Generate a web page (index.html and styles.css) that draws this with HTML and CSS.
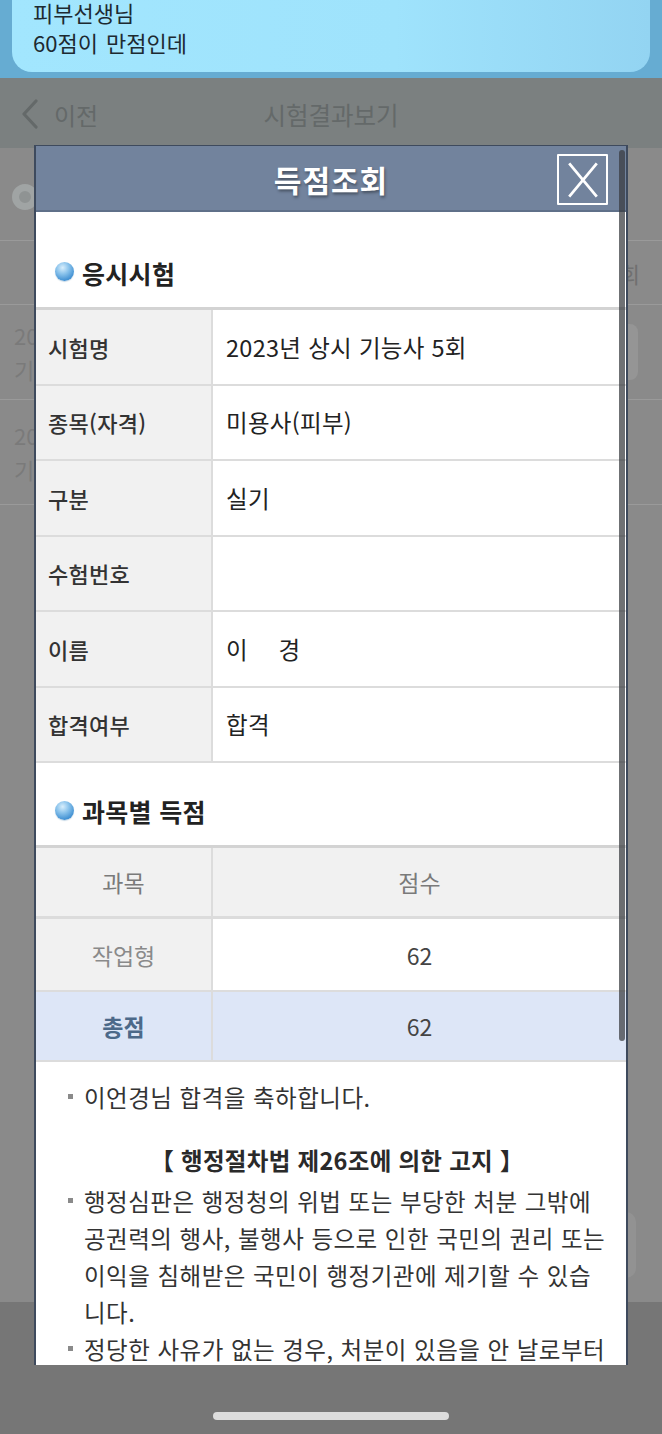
FILE: index.html
```html
<!DOCTYPE html>
<html lang="ko">
<head>
<meta charset="utf-8">
<title>득점조회</title>
<link rel="stylesheet" href="styles.css">
</head>
<body>
<div class="screen">
  <div class="statusbar">
    <div class="banner">
      <div class="banner-text">피부선생님<br>60점이 만점인데</div>
    </div>
  </div>

  <div class="appbar">
    <div class="back">
      <svg class="chev" viewBox="0 0 20 30" width="20" height="30"><path d="M16 2 L4 15 L16 28" fill="none" stroke="#646969" stroke-width="3.2" stroke-linecap="round" stroke-linejoin="round"/></svg>
      <span>이전</span>
    </div>
    <div class="apptitle">시험결과보기</div>
    <div></div>
  </div>

  <div class="page">
    <div class="filter"><span class="ring"></span></div>
    <div class="list-head"><span>조회</span></div>
    <div class="list-row">
      <div class="lr-text">2023<br>기능</div>
      <div class="lr-btn"></div>
    </div>
    <div class="list-row tall">
      <div class="lr-text">2023<br>기능</div>
    </div>
    <div class="page-fill"></div>
    <div class="float-box"></div>
  </div>

  <div class="tabbar">
    <div class="home-ind"></div>
  </div>

  <div class="modal">
    <div class="modal-head">
      <h1>득점조회</h1>
      <button class="close" type="button" aria-label="닫기">
        <svg viewBox="0 0 50 50" width="46" height="46"><path d="M10 7 L40 43 M40 7 L10 43" stroke="#fff" stroke-width="3" fill="none"/></svg>
      </button>
    </div>
    <div class="modal-body">
      <h2 class="sec sec1"><span class="dot"></span>응시시험</h2>
      <div class="info">
        <div class="row"><div class="lab">시험명</div><div class="val">2023년 상시 기능사 5회</div></div>
        <div class="row"><div class="lab">종목(자격)</div><div class="val">미용사(피부)</div></div>
        <div class="row"><div class="lab">구분</div><div class="val">실기</div></div>
        <div class="row"><div class="lab">수험번호</div><div class="val"></div></div>
        <div class="row"><div class="lab">이름</div><div class="val">이&nbsp;&emsp;경</div></div>
        <div class="row"><div class="lab">합격여부</div><div class="val">합격</div></div>
      </div>

      <h2 class="sec sec2"><span class="dot"></span>과목별 득점</h2>
      <div class="score">
        <div class="srow shead"><div class="sl">과목</div><div class="sv">점수</div></div>
        <div class="srow sitem"><div class="sl">작업형</div><div class="sv">62</div></div>
        <div class="srow stotal"><div class="sl">총점</div><div class="sv">62</div></div>
      </div>

      <div class="notes">
        <p class="bul">이언경님 합격을 축하합니다.</p>
        <p class="notice-title">【 행정절차법 제26조에 의한 고지 】</p>
        <p class="bul">행정심판은 행정청의 위법 또는 부당한 처분 그밖에 공권력의 행사, 불행사 등으로 인한 국민의 권리 또는 이익을 침해받은 국민이 행정기관에 제기할 수 있습니다.</p>
        <p class="bul">정당한 사유가 없는 경우, 처분이 있음을 안 날로부터 90일 이내에 행정심판을 청구할 수 있습니다.</p>
      </div>
    </div>
    <div class="scrollbar"></div>
  </div>
</div>
</body>
</html>
```

FILE: styles.css
```css
* { box-sizing: border-box; }

html, body {
  margin: 0;
  padding: 0;
}

body {
  width: 662px;
  height: 1434px;
  overflow: hidden;
  font-family: "Noto Sans CJK KR", "Noto Sans", sans-serif;
  background: #8a8a8a;
}

.screen {
  position: relative;
  width: 662px;
  height: 1434px;
  overflow: hidden;
  display: flex;
  flex-direction: column;
}

/* ---------- notification banner ---------- */
.statusbar {
  height: 78px;
  background: #66acd2;
  padding: 0 12px;
}

.banner {
  height: 75px;
  border-radius: 0 0 20px 20px;
  background: linear-gradient(90deg, #a2e6fe 0%, #9fe3fc 60%, #93d4f2 100%);
  padding-left: 21px;
}

.banner-text {
  margin-top: -3px;
  font-size: 22px;
  line-height: 30px;
  color: #1d2a31;
  word-spacing: 2px;
}

/* ---------- dimmed app bar ---------- */
.appbar {
  height: 70px;
  background: #7b8080;
  display: grid;
  grid-template-columns: 1fr auto 1fr;
  align-items: center;
}

.back {
  display: flex;
  align-items: center;
  gap: 14px;
  padding-left: 20px;
  color: #646969;
  font-size: 24px;
  padding-top: 2px;
}

.chev { display: block; }

.apptitle {
  font-size: 24.5px;
  color: #646969;
  padding-top: 2px;
}

/* ---------- dimmed page behind ---------- */
.page {
  flex: 1;
  background: #8a8a8a;
  display: flex;
  flex-direction: column;
}

.filter {
  height: 92px;
  display: flex;
  align-items: center;
  padding-left: 12px;
  padding-top: 6px;
}

.ring {
  width: 26px;
  height: 26px;
  border-radius: 50%;
  border: 7px solid #a0a4a4;
  background: #8f9393;
}

.list-head {
  height: 65px;
  border-top: 1px solid #9a9a9a;
  border-bottom: 1px solid #9a9a9a;
  display: flex;
  align-items: center;
  justify-content: flex-end;
  padding-right: 22px;
  font-size: 22px;
  color: #707070;
}

.list-row {
  height: 95px;
  border-bottom: 1px solid #9a9a9a;
  display: flex;
  align-items: center;
  justify-content: space-between;
  padding: 0 24px 0 14px;
}

.list-row.tall { height: 105px; }

.lr-text {
  width: 20px;
  overflow: hidden;
  white-space: nowrap;
  font-size: 22px;
  line-height: 34px;
  color: #7a7a7a;
}

.lr-btn {
  width: 80px;
  height: 56px;
  border-radius: 8px;
  background: #959595;
}

.page-fill { flex: 1; }

.float-box {
  align-self: flex-end;
  margin-right: 26px;
  margin-bottom: 24px;
  width: 80px;
  height: 66px;
  border-radius: 10px;
  background: #929292;
}

/* ---------- bottom tab bar ---------- */
.tabbar {
  height: 132px;
  background: #767676;
  display: flex;
  align-items: flex-end;
  justify-content: center;
  padding-bottom: 14px;
}

.home-ind {
  width: 236px;
  height: 8px;
  border-radius: 4px;
  background: #dcdcdc;
}

/* ---------- modal ---------- */
.modal {
  position: absolute;
  left: 34px;
  top: 145px;
  width: 594px;
  height: 1220px;
  background: #fff;
  border: 2px solid #3e4a5d;
  border-top-width: 1px;
  border-bottom: none;
  overflow: hidden;
  display: flex;
  flex-direction: column;
}

.modal-head {
  position: relative;
  height: 66px;
  flex: none;
  background: #72839d;
  border-bottom: 2px solid #5f7089;
  display: flex;
  align-items: center;
  justify-content: center;
}

.modal-head h1 {
  margin: 0;
  font-size: 30px;
  font-weight: 700;
  color: #fff;
  letter-spacing: 1px;
  text-shadow: 1px 2px 3px rgba(0, 0, 0, 0.4);
  padding-top: 1px;
}

.close {
  position: absolute;
  left: 521px;
  top: 8px;
  width: 51px;
  height: 51px;
  padding: 0;
  margin: 0;
  background: transparent;
  border: 2px solid #fff;
  border-radius: 1px;
  display: flex;
  align-items: center;
  justify-content: center;
}

.close svg { display: block; }

.scrollbar {
  position: absolute;
  left: 583px;
  top: 4px;
  width: 6px;
  height: 891px;
  border-radius: 3px;
  background: rgba(55, 58, 62, 0.72);
}

.modal-body {
  flex: 1;
}

/* section titles */
.sec {
  margin: 0;
  display: flex;
  align-items: center;
  gap: 8px;
  padding-left: 19px;
  font-size: 25px;
  font-weight: 700;
  color: #222;
  line-height: 34px;
  letter-spacing: 0.3px;
}

.sec1 { height: 95px; padding-top: 26px; }
.sec2 { height: 82px; padding-top: 14px; }

.dot {
  width: 19px;
  height: 19px;
  border-radius: 50%;
  background: radial-gradient(circle at 40% 30%, #d8eefc 0%, #8cc4ec 35%, #3f8fd2 75%, #3a83c4 100%);
  box-shadow: 0 1px 1px rgba(90, 140, 180, 0.35);
  flex: none;
  margin-top: -2px;
}

/* info table */
.info {
  border-top: 3px solid #d3d3d3;
}

.row {
  display: grid;
  grid-template-columns: 177px 1fr;
  height: 75.5px;
  border-bottom: 2px solid #dcdcdc;
}

.lab {
  background: #f1f1f1;
  border-right: 2px solid #dcdcdc;
  display: flex;
  align-items: center;
  padding-left: 12px;
  font-size: 22px;
  font-weight: 500;
  color: #333;
  letter-spacing: 0.3px;
}

.val {
  display: flex;
  align-items: center;
  padding-left: 13px;
  font-size: 23.5px;
  color: #222;
  letter-spacing: 0.3px;
}

/* score table */
.score {
  border-top: 3px solid #d3d3d3;
}

.srow {
  display: grid;
  grid-template-columns: 177px 1fr;
  border-bottom: 2px solid #dcdcdc;
  font-size: 23px;
}

.sl, .sv {
  display: flex;
  align-items: center;
  justify-content: center;
}

.sl {
  border-right: 2px solid #dcdcdc;
  background: #f1f1f1;
}

.shead { height: 71px; background: #f1f1f1; color: #7a7a7a; border-bottom-width: 3px; }
.sitem { height: 73px; }
.sitem .sl { color: #8a8a8a; }
.sitem .sv { color: #444; }
.stotal { height: 70px; background: #dde6f7; }
.stotal .sl { background: #dde6f7; color: #4c6989; font-weight: 700; }
.stotal .sv { color: #444; }

/* notes */
.notes {
  padding: 17px 20px 0 32px;
  font-size: 23.5px;
  line-height: 37px;
  color: #333;
  letter-spacing: 0.5px;
}

.notes p { margin: 0; }

.bul {
  display: grid;
  grid-template-columns: 16px 1fr;
  word-break: break-all;
}

.bul::before {
  content: "";
  width: 5px;
  height: 5px;
  margin-top: 15px;
  background: #8a8a8a;
}

.notes .notice-title {
  margin-top: 26px;
  margin-bottom: 4px;
  text-align: center;
  font-weight: 700;
  color: #2a2a2a;
  letter-spacing: 0.3px;
}
```
